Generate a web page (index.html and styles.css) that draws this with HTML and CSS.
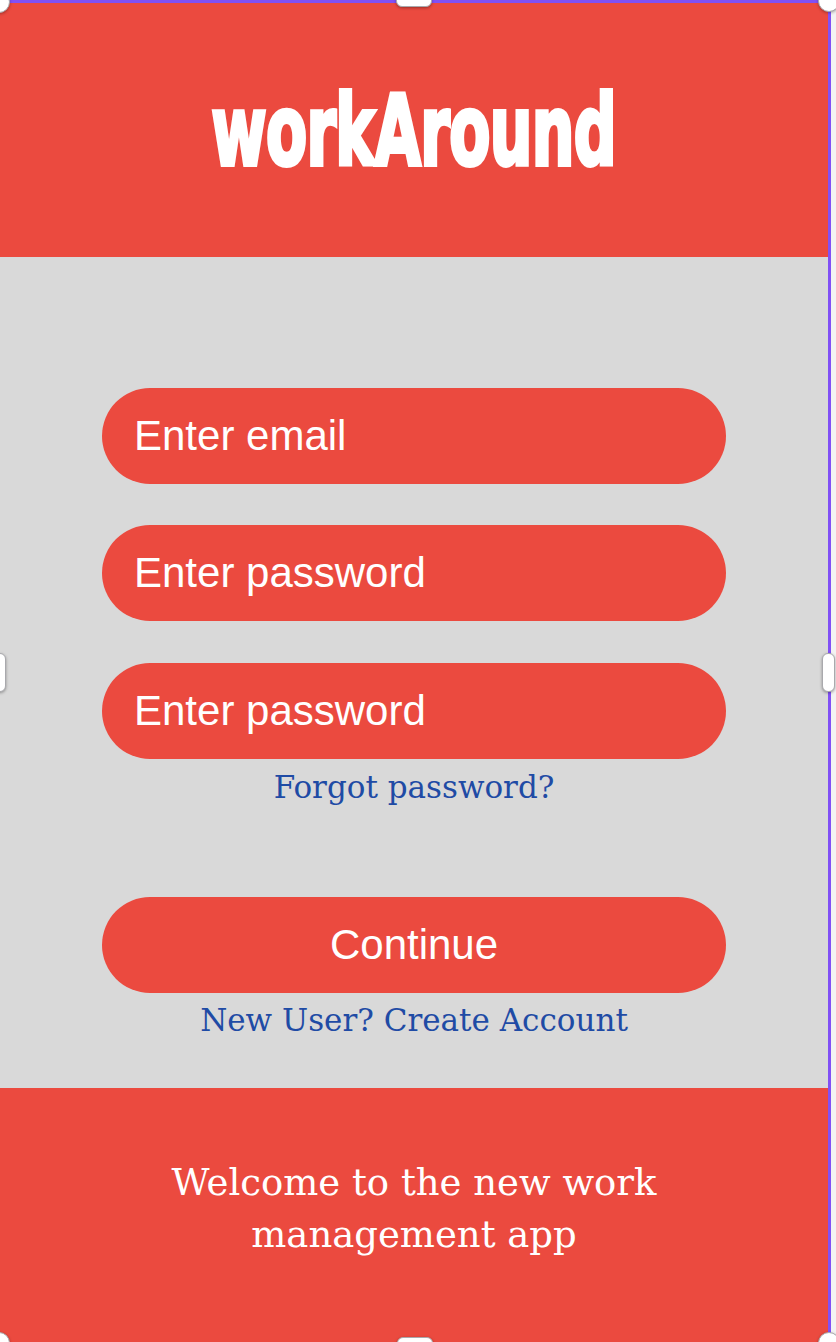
FILE: index.html
```html
<!DOCTYPE html>
<html lang="en">
<head>
<meta charset="utf-8">
<title>workAround</title>
<link rel="stylesheet" href="styles.css">
</head>
<body>
<div class="frame">
  <header class="top">
    <h1 class="brand"><span>workAround</span></h1>
  </header>
  <main class="panel">
    <div class="field">Enter email</div>
    <div class="field">Enter password</div>
    <div class="field">Enter password</div>
    <a class="link forgot" href="#">Forgot password?</a>
    <button class="btn">Continue</button>
    <a class="link create" href="#">New User? Create Account</a>
  </main>
  <footer class="bottom">
    <p class="welcome">Welcome to the new work management app</p>
  </footer>
</div>
<div class="handle h-top"></div>
<div class="handle h-bottom"></div>
<div class="handle h-left"></div>
<div class="handle h-right"></div>
<div class="corner c-tl"></div>
<div class="corner c-tr"></div>
<div class="corner c-bl"></div>
<div class="corner c-br"></div>
</body>
</html>
```
FILE: styles.css
```css
html, body {
  margin: 0;
  padding: 0;
}
body {
  background: #f3f3f3;
  width: 836px;
  height: 1342px;
  overflow: hidden;
  position: relative;
  font-family: "Liberation Sans", Arial, sans-serif;
}
.frame {
  width: 828px;
  border-top: 3px solid #8150f5;
  border-right: 3px solid #8150f5;
  display: flex;
  flex-direction: column;
}
.top {
  height: 254px;
  background: #eb4a3f;
  display: flex;
  align-items: center;
  justify-content: center;
}
.brand {
  margin: 0;
  color: #fff;
  font-family: "Liberation Sans Narrow", "DejaVu Sans Condensed", "Liberation Sans", sans-serif;
  font-weight: 700;
  font-size: 98px;
  line-height: 1;
  letter-spacing: -1px;
  -webkit-text-stroke: 4px #fff;
  margin-top: 2px;
}
.brand span {
  display: inline-block;
  transform: scaleX(0.68);
}
.panel {
  height: 831px;
  box-sizing: border-box;
  background: #d9d9d9;
  padding: 131px 102px 0;
  display: flex;
  flex-direction: column;
}
.field {
  height: 96px;
  box-sizing: border-box;
  border-radius: 48px;
  background: #eb4a3f;
  color: #fff;
  font-size: 42px;
  padding-left: 32px;
  display: flex;
  align-items: center;
}
.field + .field {
  margin-top: 41px;
}
.field + .field + .field {
  margin-top: 42px;
}
.link {
  color: #1f4ba5;
  text-decoration: none;
  text-align: center;
  font-family: "DejaVu Serif", "Liberation Serif", serif;
  font-size: 31px;
  line-height: 44px;
}
.forgot {
  margin-top: 6px;
}
.btn {
  margin-top: 88px;
  height: 96px;
  border: 0;
  border-radius: 48px;
  background: #eb4a3f;
  color: #fff;
  font-family: "Liberation Sans", Arial, sans-serif;
  font-size: 42px;
  padding: 0;
}
.create {
  margin-top: 5px;
}
.bottom {
  height: 260px;
  background: #eb4a3f;
  padding-top: 69px;
  box-sizing: border-box;
}
.welcome {
  margin: 0 auto;
  max-width: 540px;
  text-align: center;
  color: #fff;
  font-family: "DejaVu Serif", "Liberation Serif", serif;
  font-size: 37px;
  line-height: 52px;
}
.handle {
  position: absolute;
  background: #fff;
  border: 1px solid #a9a9ad;
  border-radius: 6px;
  box-shadow: 0 1px 3px rgba(0, 0, 0, 0.35);
}
.h-top { left: 396px; top: -6px; width: 34px; height: 11px; }
.h-bottom { left: 397px; top: 1337px; width: 34px; height: 11px; }
.h-left { left: -7px; top: 653px; width: 11px; height: 37px; }
.h-right { left: 822px; top: 653px; width: 11px; height: 37px; }
.corner {
  position: absolute;
  width: 22px;
  height: 22px;
  border-radius: 50%;
  background: #fff;
  border: 1px solid #a9a9ad;
  box-shadow: 0 1px 3px rgba(0, 0, 0, 0.3);
  box-sizing: border-box;
}
.c-tl { left: -12px; top: -9px; }
.c-tr { left: 818px; top: -10px; }
.c-bl { left: -12px; top: 1332px; }
.c-br { left: 818px; top: 1332px; }
```
